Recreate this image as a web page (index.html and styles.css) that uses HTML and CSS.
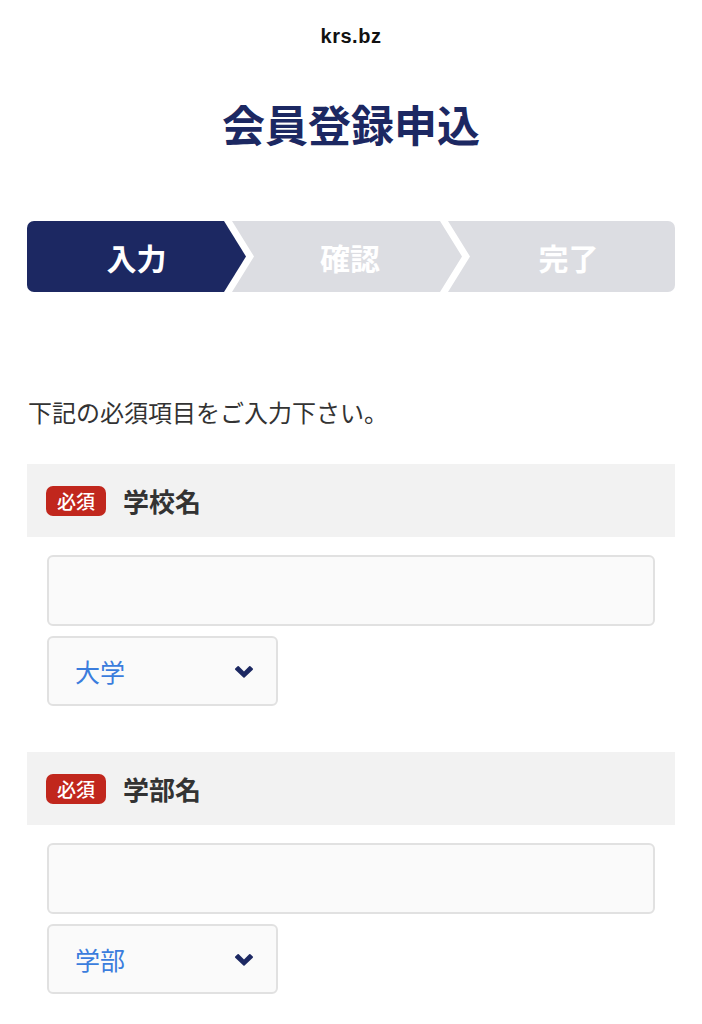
FILE: index.html
```html
<!DOCTYPE html>
<html lang="ja">
<head>
<meta charset="utf-8">
<title>会員登録申込</title>
<link rel="stylesheet" href="styles.css">
</head>
<body>
<div class="page">
  <div class="site">krs.bz</div>
  <h1 class="title">会員登録申込</h1>

  <div class="steps">
    <div class="step step-first active">入力</div>
    <div class="step step-mid">確認</div>
    <div class="step step-last">完了</div>
  </div>

  <p class="lead">下記の必須項目をご入力下さい。</p>

  <section class="field">
    <div class="field-head">
      <span class="badge">必須</span>
      <span class="field-label">学校名</span>
    </div>
    <div class="field-body">
      <div class="input"></div>
      <div class="select">
        <span class="select-text">大学</span>
        <svg class="chev" viewBox="0 0 20 13" width="20" height="13"><path d="M1.2 3.6 L3.6 1.2 Q4.2 0.6 4.8 1.2 L10 6.4 L15.2 1.2 Q15.8 0.6 16.4 1.2 L18.8 3.6 Q19.4 4.2 18.8 4.8 L10.6 12.4 Q10 13 9.4 12.4 L1.2 4.8 Q0.6 4.2 1.2 3.6 Z" fill="#1c2862"/></svg>
      </div>
    </div>
  </section>

  <section class="field">
    <div class="field-head">
      <span class="badge">必須</span>
      <span class="field-label">学部名</span>
    </div>
    <div class="field-body">
      <div class="input"></div>
      <div class="select">
        <span class="select-text">学部</span>
        <svg class="chev" viewBox="0 0 20 13" width="20" height="13"><path d="M1.2 3.6 L3.6 1.2 Q4.2 0.6 4.8 1.2 L10 6.4 L15.2 1.2 Q15.8 0.6 16.4 1.2 L18.8 3.6 Q19.4 4.2 18.8 4.8 L10.6 12.4 Q10 13 9.4 12.4 L1.2 4.8 Q0.6 4.2 1.2 3.6 Z" fill="#1c2862"/></svg>
      </div>
    </div>
  </section>
</div>
</body>
</html>
```

FILE: styles.css
```css
* { box-sizing: border-box; }
html, body { margin: 0; padding: 0; background: #fff; }
body {
  font-family: "Noto Sans CJK JP", "Noto Sans", sans-serif;
  color: #333;
}
.page {
  padding: 24px 27px 0 27px;
}
.site {
  text-align: center;
  font-family: "Liberation Sans", "Noto Sans", sans-serif;
  font-weight: 700;
  font-size: 20px;
  line-height: 24px;
  letter-spacing: 0.5px;
  color: #111;
}
.title {
  margin: 50px 0 0 0;
  text-align: center;
  font-size: 43px;
  line-height: 50px;
  font-weight: 700;
  color: #1c2862;
}
.steps {
  margin-top: 73px;
  display: flex;
  height: 71px;
  border-radius: 7px;
  overflow: hidden;
}
.step {
  display: flex;
  align-items: center;
  justify-content: center;
  background: #dcdde2;
  color: #fff;
  font-weight: 700;
  font-size: 30px;
  height: 100%;
}
.step.active { background: #1c2862; }
.step-first {
  width: 219px;
  flex: 0 0 219px;
  clip-path: polygon(0 0, calc(100% - 22px) 0, 100% 50%, calc(100% - 22px) 100%, 0 100%);
}
.step-mid {
  width: 230px;
  flex: 0 0 230px;
  margin-left: -14px;
  padding-left: 6px;
  clip-path: polygon(0 0, calc(100% - 22px) 0, 100% 50%, calc(100% - 22px) 100%, 0 100%, 22px 50%);
}
.step-last {
  flex: 1 1 auto;
  margin-left: -14px;
  padding-left: 14px;
  clip-path: polygon(0 0, 100% 0, 100% 100%, 0 100%, 22px 50%);
}
.lead {
  margin: 104px 0 0 1px;
  font-size: 24px;
  line-height: 32px;
  color: #333;
}
.field { margin-top: 36px; }
.field + .field { margin-top: 46px; }
.field-head {
  background: #f2f2f2;
  height: 73px;
  display: flex;
  align-items: center;
  padding-left: 19px;
  gap: 17px;
}
.badge {
  display: inline-flex;
  align-items: center;
  height: 30px;
  padding: 0 11px;
  background: #c1271d;
  color: #fff;
  border-radius: 7px;
  font-size: 19px;
  font-weight: 500;
}
.field-label {
  font-size: 26px;
  font-weight: 700;
  color: #333;
}
.field-body {
  padding: 18px 20px 0 20px;
  display: flex;
  flex-direction: column;
  gap: 10px;
}
.input {
  height: 71px;
  background: #fafafa;
  border: 2px solid #e1e1e1;
  border-radius: 6px;
}
.select {
  width: 231px;
  height: 70px;
  background: #fafafa;
  border: 2px solid #e1e1e1;
  border-radius: 6px;
  display: flex;
  align-items: center;
  justify-content: space-between;
  padding: 0 22px 0 26px;
}
.select-text {
  font-size: 25px;
  color: #3b7ddd;
}
.chev { display: block; }
```
